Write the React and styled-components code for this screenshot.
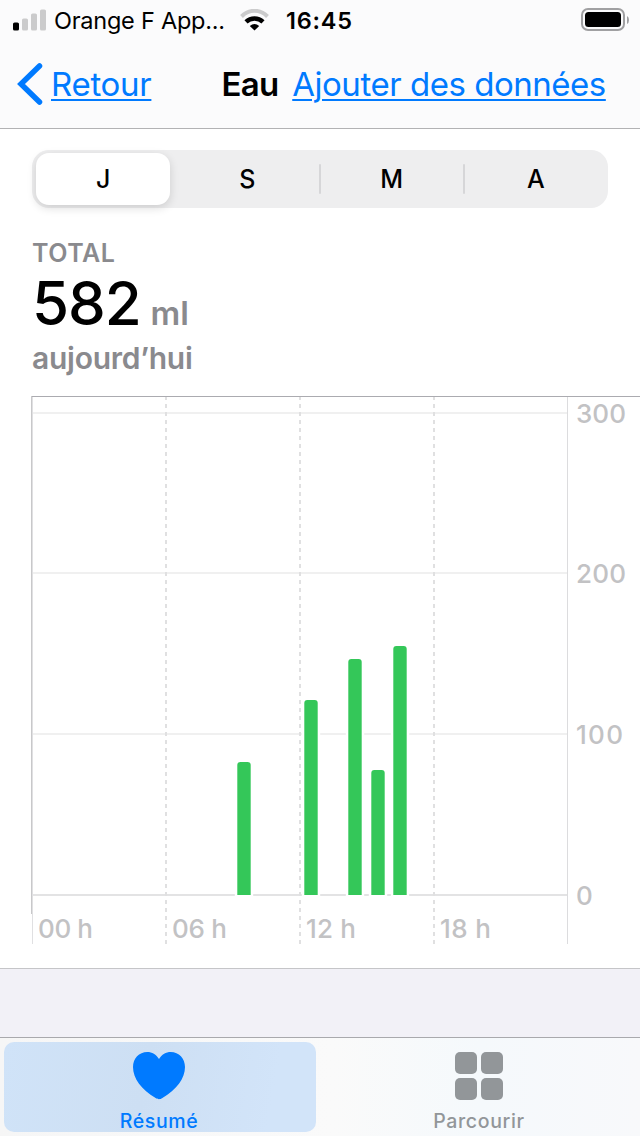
import React from 'react';
import styled, { createGlobalStyle } from 'styled-components';

const GlobalStyle = createGlobalStyle`
  * {
    box-sizing: border-box;
  }

  body {
    margin: 0;
    background: #fff;
    font-family: Inter, 'Liberation Sans', sans-serif;
    -webkit-font-smoothing: antialiased;
  }
`;

const Screen = styled.div`
  display: flex;
  flex-direction: column;
  width: 640px;
  height: 1136px;
  overflow: hidden;
  background: #fff;
`;

const Header = styled.header`
  height: 129px;
  background: #fbfbfc;
  border-bottom: 1px solid #b2b2b4;
`;

const StatusBar = styled.div`
  display: flex;
  align-items: center;
  height: 40px;
  padding: 0 11px 0 13px;
  color: #000;
`;

const Carrier = styled.span`
  width: 186px;
  margin-left: 7px;
  font-size: 23.5px;
  letter-spacing: -0.24px;
  white-space: nowrap;
`;

const Time = styled.span`
  margin-left: 16px;
  font-size: 23.5px;
  font-weight: 600;
  letter-spacing: 0.8px;
`;

const Battery = styled.svg`
  margin-left: auto;
`;

const NavBar = styled.nav`
  display: flex;
  align-items: center;
  height: 88px;
  padding-left: 17px;
  font-size: 33px;
  white-space: nowrap;
`;

const NavLink = styled.a`
  margin-left: ${(props) => props.$left}px;
  color: #007aff;
  letter-spacing: ${(props) => props.$spacing}px;
  text-decoration: underline;
  text-decoration-thickness: 2px;
  text-underline-offset: 3px;
`;

const Title = styled.h1`
  margin: 0 0 0 70px;
  font-size: 33px;
  font-weight: 600;
  letter-spacing: -0.6px;
`;

const Segments = styled.div`
  display: flex;
  flex-shrink: 0;
  height: 58px;
  margin: 21px 32px 0;
  padding: 3px 5px 3px 4px;
  background: #eeeeef;
  border-radius: 17px;
`;

const Segment = styled.button`
  display: flex;
  flex: 1;
  align-items: center;
  justify-content: center;
  padding: 0;
  border: none;
  border-radius: 13px;
  background: ${(props) => (props.$active ? '#fff' : 'transparent')};
  box-shadow: ${(props) => (props.$active ? '0 3px 10px rgba(0, 0, 0, 0.14)' : 'none')};
  color: #000;
  font-family: inherit;
  font-size: 25px;
  font-weight: ${(props) => (props.$active ? 500 : 450)};
`;

const Separator = styled.span`
  align-self: center;
  width: 2px;
  height: 30px;
  margin: 0 4px;
  border-radius: 1px;
  background: ${(props) => (props.$hidden ? 'transparent' : '#d6d6d8')};
`;

const Summary = styled.section`
  height: 188px;
  flex-shrink: 0;
  padding: 30px 32px 0;
  color: #8a8a8e;
  font-weight: 600;
`;

const Label = styled.div`
  height: 30px;
  font-size: 25px;
  line-height: 30px;
  letter-spacing: 0.5px;
`;

const Amount = styled.div`
  display: flex;
  align-items: baseline;
  height: 70px;
  line-height: 70px;
`;

const Value = styled.span`
  color: #000;
  font-size: 60px;
  font-weight: 500;
  letter-spacing: -1.1px;
`;

const Unit = styled.span`
  margin-left: 10px;
  font-size: 33px;
`;

const Period = styled.div`
  height: 40px;
  font-size: 30px;
  line-height: 40px;
  letter-spacing: -0.27px;
`;

const ChartSvg = styled.svg`
  display: block;
  flex-shrink: 0;
`;

const AxisText = styled.text`
  fill: #c2c2c4;
  font-family: Inter, 'Liberation Sans', sans-serif;
  font-size: 26px;
  font-weight: 450;
`;

const Gap = styled.div`
  flex: 1;
  background: #f2f1f7;
  border-top: 1px solid #c5c5c8;
`;

const TabBar = styled.footer`
  display: flex;
  flex-shrink: 0;
  height: 99px;
  padding: 4px;
  gap: 8px;
  background: linear-gradient(90deg, #f6f6f6 0%, #fafafa 52%, #f5f9fc 75%, #f8f9fb 100%);
  border-top: 1px solid #a9a9ad;
`;

const Tab = styled.div`
  display: flex;
  flex: 1;
  flex-direction: column;
  align-items: center;
  height: 90px;
  padding: 10px 2px 0 0;
  border-radius: 10px;
  background: ${(props) =>
    props.$active
      ? 'linear-gradient(100deg, #d0e3f8 0%, #cddff3 45%, #d2e4f9 85%)'
      : 'transparent'};
  color: ${(props) => (props.$active ? '#007aff' : '#929699')};

  svg {
    flex-shrink: 0;
  }
`;

const TabLabel = styled.span`
  margin-top: 9px;
  font-size: 19.5px;
  font-weight: 450;
  line-height: 24px;
  letter-spacing: 0.65px;
`;

const gridLines = [
  { y: 413, label: '300', width: 50 },
  { y: 573, label: '200', width: 50 },
  { y: 734, label: '100', width: 47 },
  { y: 895, label: '0', width: 16 },
];

const hours = [
  { x: 32, label: '00 h', width: 55 },
  { x: 166, label: '06 h', width: 55 },
  { x: 300, label: '12 h', width: 50 },
  { x: 434, label: '18 h', width: 51 },
];

const bars = [
  { x: 237.3, top: 762 },
  { x: 304.3, top: 700 },
  { x: 348.3, top: 659 },
  { x: 371.3, top: 770 },
  { x: 393.3, top: 646 },
];

const barPath = ({ x, top }) =>
  `M${x} 895V${top + 3}q0-3 3-3h7.4q3 0 3 3V895Z`;

const Signal = () => (
  <svg width="34" height="22" viewBox="0 0 34 22">
    <rect x="0" y="13.5" width="6" height="8" rx="1.6" fill="#000" />
    <rect x="9" y="9.5" width="6" height="12" rx="1.6" fill="#cbcbcc" />
    <rect x="18" y="4.5" width="6" height="17" rx="1.6" fill="#cbcbcc" />
    <rect x="27" y="0.5" width="6" height="21" rx="1.6" fill="#cbcbcc" />
  </svg>
);

const Wifi = () => (
  <svg width="30" height="22" viewBox="0 0 30 22" fill="none">
    <path d="M1.5 7.5C9-.1 20-.1 27.5 7.5" stroke="#cbcbcc" strokeWidth="4" />
    <path d="M6 12.800C10.800 8.300 18.200 8.300 23 12.800" stroke="#000" strokeWidth="4.500" />
    <path d="M14.500 21.500 9.800 16.900Q14.500 13.200 19.200 16.900Z" fill="#000" />
  </svg>
);

const Chart = () => (
  <ChartSvg width="640" height="572" viewBox="0 396 640 572">
    {gridLines.map((line) => (
      <rect
        key={line.label}
        x="33"
        y={line.y - 1}
        width="534"
        height="2"
        fill={line.y === 895 ? '#e3e3e4' : '#f0f0f0'}
      />
    ))}
    {bars.map((bar) => (
      <rect key={bar.x} x={bar.x - 2.5} y={bar.top - 3} width="18.4" height={899 - bar.top} fill="#fff" />
    ))}
    {hours.slice(1).map((hour) => (
      <path
        key={hour.x}
        d={`M${hour.x} 396V944`}
        stroke="#e0e0e1"
        strokeWidth="2"
        strokeDasharray="4 4"
      />
    ))}
    {bars.map((bar) => (
      <path key={bar.x} d={barPath(bar)} fill="#34c759" />
    ))}
    <rect x="31" y="396" width="1" height="518" fill="#c8c8ca" />
    <rect x="32" y="396" width="1" height="548" fill="#e0e0e2" />
    <rect x="567" y="396" width="1" height="548" fill="#dcdcde" />
    <rect x="32" y="396" width="608" height="1" fill="#ababb0" />
    {gridLines.map((line) => (
      <AxisText key={line.label} x="576" y={line.y + 10} textLength={line.width}>
        {line.label}
      </AxisText>
    ))}
    {hours.map((hour) => (
      <AxisText key={hour.x} x={hour.x + 6} y="938" textLength={hour.width}>
        {hour.label}
      </AxisText>
    ))}
  </ChartSvg>
);

const App = () => {
  return (
    <>
      <GlobalStyle />
      <Screen>
        <Header>
          <StatusBar>
            <Signal />
            <Carrier>Orange F App...</Carrier>
            <Wifi />
            <Time>16:45</Time>
            <Battery width="48" height="24" viewBox="0 0 48 24">
              <rect x="1" y="1" width="42" height="21" rx="6" fill="none" stroke="#a0a0a2" strokeWidth="2" />
              <rect x="4" y="4" width="36" height="15" rx="3.5" fill="#000" />
              <path d="M46 8v8q2-1 2-4t-2-4Z" fill="#a0a0a2" />
            </Battery>
          </StatusBar>
          <NavBar>
            <svg width="26" height="44" viewBox="0 0 26 44" fill="none">
              <path d="M22.500 4 4 22l18.500 18" stroke="#007aff" strokeWidth="5.500" strokeLinecap="round" strokeLinejoin="miter" />
            </svg>
            <NavLink $left={8} $spacing={-0.3}>Retour</NavLink>
            <Title>Eau</Title>
            <NavLink $left={13.500} $spacing={-0.47}>Ajouter des données</NavLink>
          </NavBar>
        </Header>
        <Segments>
          <Segment $active>J</Segment>
          <Separator $hidden />
          <Segment>S</Segment>
          <Separator />
          <Segment>M</Segment>
          <Separator />
          <Segment>A</Segment>
        </Segments>
        <Summary>
          <Label>TOTAL</Label>
          <Amount>
            <Value>582</Value>
            <Unit>ml</Unit>
          </Amount>
          <Period>aujourd’hui</Period>
        </Summary>
        <Chart />
        <Gap />
        <TabBar>
          <Tab $active>
            <svg width="52" height="48" viewBox="0 0 52 48">
              <path d="M26 7C23.300 2.600 19 0 14.300 0 6 0 0 6.400 0 15c0 11.500 8.500 22.500 22.600 31.100 1.300.8 2.200 1.200 3.400 1.200s2.100-.4 3.400-1.200C43.500 37.500 52 26.500 52 15 52 6.400 46 0 37.700 0 33 0 28.700 2.600 26 7Z" fill="currentColor" />
            </svg>
            <TabLabel>Résumé</TabLabel>
          </Tab>
          <Tab>
            <svg width="48" height="48" viewBox="0 0 48 48" fill="currentColor">
              <rect width="22" height="22" rx="5" />
              <rect x="26" width="22" height="22" rx="5" />
              <rect y="26" width="22" height="22" rx="5" />
              <rect x="26" y="26" width="22" height="22" rx="5" />
            </svg>
            <TabLabel>Parcourir</TabLabel>
          </Tab>
        </TabBar>
      </Screen>
    </>
  );
};

export default App;
